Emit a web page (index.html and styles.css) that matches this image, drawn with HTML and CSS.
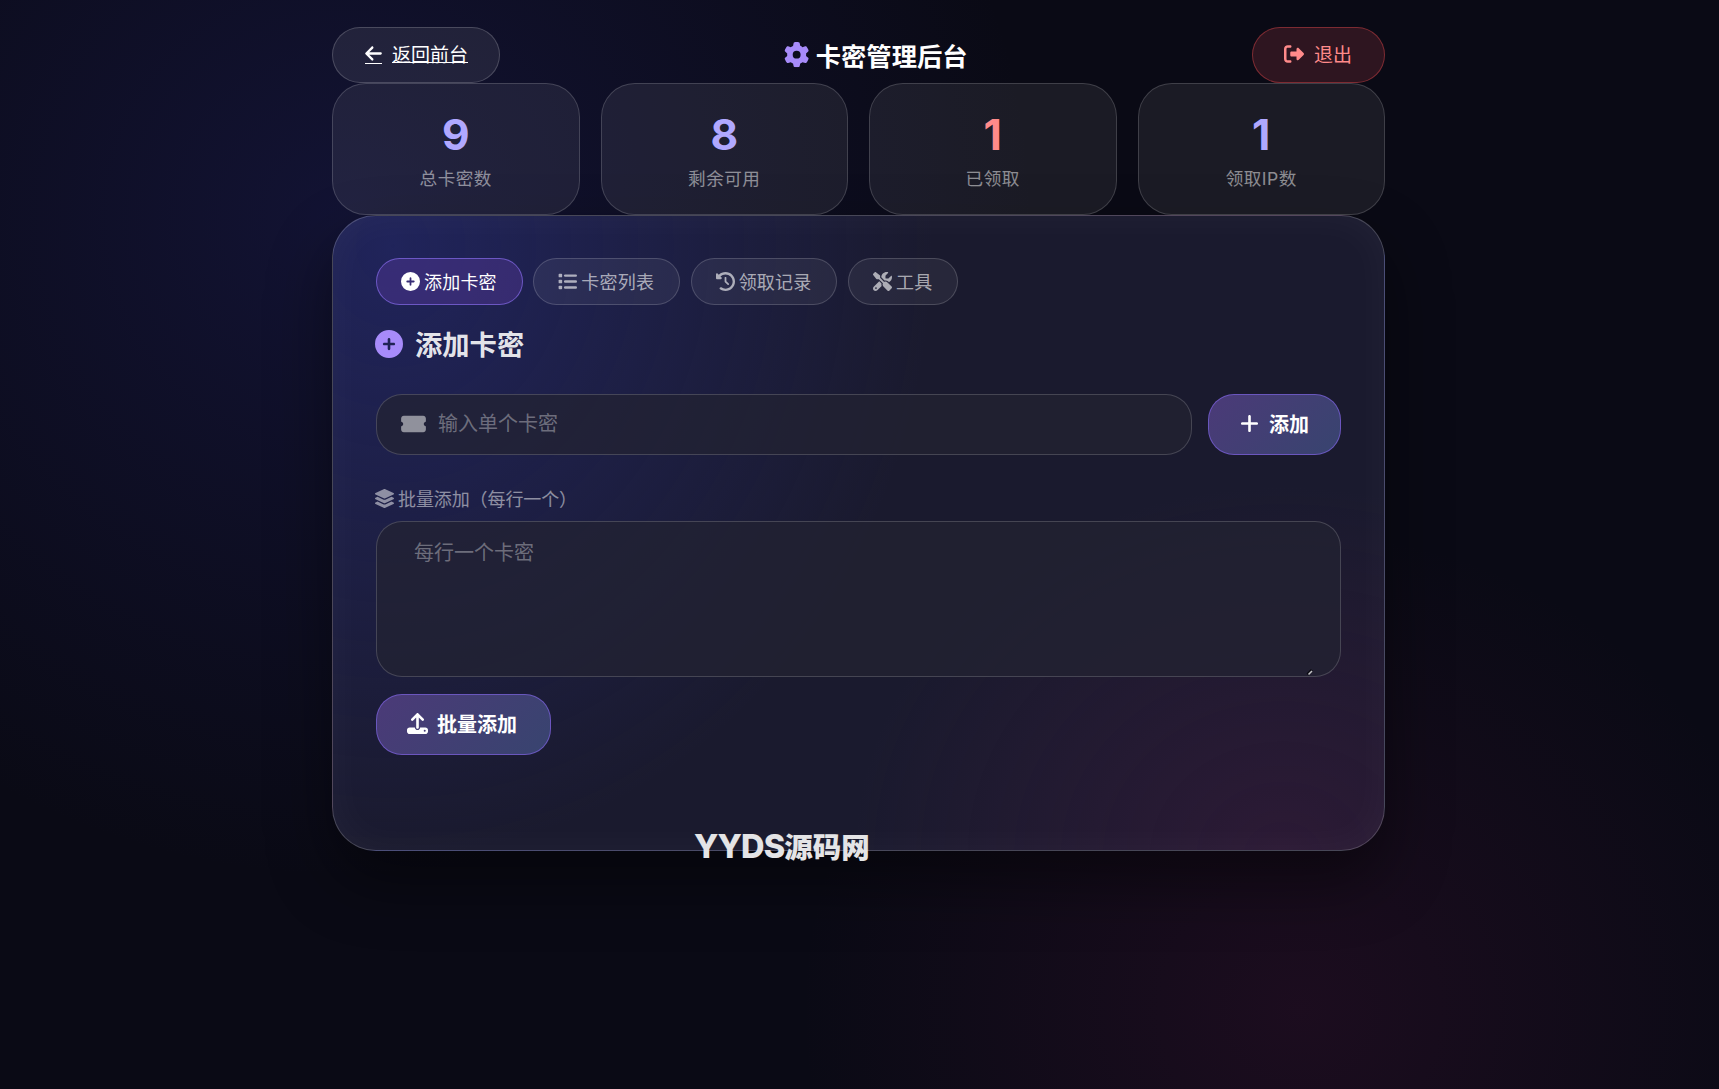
FILE: index.html
```html
<!DOCTYPE html>
<html lang="zh-CN">
<head>
<meta charset="utf-8">
<title>卡密管理后台</title>
<link rel="stylesheet" href="styles.css">
</head>
<body>
<svg class="sprite" width="0" height="0">
  <symbol id="i-back" viewBox="0 0 448 512"><path d="M9.4 233.4c-12.5 12.5-12.5 32.8 0 45.3l160 160c12.5 12.5 32.8 12.5 45.3 0s12.5-32.8 0-45.3L109.2 288 416 288c17.7 0 32-14.3 32-32s-14.3-32-32-32l-306.7 0L214.6 118.6c12.5-12.5 12.5-32.8 0-45.3s-32.8-12.5-45.3 0l-160 160z"/></symbol>
  <symbol id="i-gear" viewBox="0 0 512 512"><path d="M495.9 166.6c3.2 8.7 .5 18.4-6.4 24.6l-43.3 39.4c1.1 8.3 1.7 16.8 1.7 25.4s-.6 17.1-1.7 25.4l43.3 39.4c6.9 6.2 9.6 15.9 6.4 24.6c-4.4 11.9-9.7 23.3-15.8 34.3l-4.7 8.1c-6.6 11-14 21.4-22.1 31.2c-5.9 7.2-15.7 9.6-24.5 6.8l-55.7-17.7c-13.4 10.3-28.2 18.9-44 25.4l-12.5 57.1c-2 9.1-9 16.3-18.2 17.8c-13.8 2.3-28 3.5-42.5 3.5s-28.7-1.2-42.5-3.5c-9.2-1.5-16.2-8.7-18.2-17.8l-12.5-57.1c-15.8-6.5-30.6-15.1-44-25.4L83.1 425.9c-8.8 2.8-18.6 .3-24.5-6.8c-8.1-9.8-15.5-20.2-22.1-31.2l-4.7-8.1c-6.1-11-11.4-22.4-15.8-34.3c-3.2-8.7-.5-18.4 6.4-24.6l43.3-39.4C64.6 273.1 64 264.6 64 256s.6-17.1 1.7-25.4L22.4 191.2c-6.9-6.2-9.6-15.9-6.4-24.6c4.4-11.9 9.7-23.3 15.8-34.3l4.7-8.1c6.6-11 14-21.4 22.1-31.2c5.9-7.2 15.7-9.6 24.5-6.8l55.7 17.7c13.4-10.3 28.2-18.9 44-25.4l12.5-57.1c2-9.1 9-16.3 18.2-17.8C227.3 1.2 241.5 0 256 0s28.7 1.2 42.5 3.5c9.2 1.5 16.2 8.7 18.2 17.8l12.5 57.1c15.8 6.5 30.6 15.1 44 25.4l55.7-17.7c8.8-2.8 18.6-.3 24.5 6.8c8.1 9.8 15.5 20.2 22.1 31.2l4.7 8.1c6.1 11 11.4 22.4 15.8 34.3zM256 336a80 80 0 1 0 0-160 80 80 0 1 0 0 160z"/></symbol>
  <symbol id="i-exit" viewBox="0 0 512 512"><path d="M377.9 105.9L500.7 228.7c7.2 7.2 11.3 17.1 11.3 27.3s-4.1 20.1-11.3 27.3L377.9 406.1c-6.4 6.4-15 9.9-24 9.9c-18.7 0-33.9-15.2-33.9-33.9l0-62.1-128 0c-17.7 0-32-14.3-32-32l0-64c0-17.7 14.3-32 32-32l128 0 0-62.1c0-18.7 15.2-33.9 33.9-33.9c9 0 17.6 3.6 24 9.9zM160 96L96 96c-17.7 0-32 14.3-32 32l0 256c0 17.7 14.3 32 32 32l64 0c17.7 0 32 14.3 32 32s-14.3 32-32 32l-64 0c-53 0-96-43-96-96L0 128C0 75 43 32 96 32l64 0c17.7 0 32 14.3 32 32s-14.3 32-32 32z"/></symbol>
  <symbol id="i-add" viewBox="0 0 512 512"><path d="M256 512A256 256 0 1 0 256 0a256 256 0 1 0 0 512zM232 344l0-64-64 0c-13.3 0-24-10.7-24-24s10.7-24 24-24l64 0 0-64c0-13.3 10.7-24 24-24s24 10.7 24 24l0 64 64 0c13.3 0 24 10.7 24 24s-10.7 24-24 24l-64 0 0 64c0 13.3-10.7 24-24 24s-24-10.7-24-24z"/></symbol>
  <symbol id="i-list" viewBox="0 0 512 512"><rect x="16" y="48" width="96" height="96" rx="24"/><rect x="16" y="208" width="96" height="96" rx="24"/><rect x="16" y="368" width="96" height="96" rx="24"/><rect x="160" y="64" width="352" height="64" rx="32"/><rect x="160" y="224" width="352" height="64" rx="32"/><rect x="160" y="384" width="352" height="64" rx="32"/></symbol>
  <symbol id="i-history" viewBox="0 0 512 512"><path d="M75 75L41 41C25.9 25.9 0 36.6 0 57.9L0 168c0 13.3 10.7 24 24 24l110.1 0c21.4 0 32.1-25.9 17-41l-30.8-30.8C155 85.5 203 64 256 64c106 0 192 86 192 192s-86 192-192 192c-40.8 0-78.6-12.7-109.7-34.4c-14.5-10.1-34.4-6.6-44.6 7.9s-6.6 34.4 7.9 44.6C151.2 495 201.7 512 256 512c141.4 0 256-114.6 256-256S397.4 0 256 0C185.3 0 121.3 28.7 75 75zm181 53c-13.3 0-24 10.7-24 24l0 104c0 6.4 2.5 12.5 7 17l72 72c9.4 9.4 24.6 9.4 33.9 0s9.4-24.6 0-33.9l-65-65 0-94.1c0-13.3-10.7-24-24-24z"/></symbol>
  <symbol id="i-tools" viewBox="0 0 512 512"><path d="M78.6 5C69.1-2.4 55.6-1.5 47 7L7 47c-8.5 8.5-9.4 22-2.1 31.6l80 104c4.5 5.9 11.6 9.4 19 9.4l54.1 0 109 109c-14.7 29-10 65.4 14.3 89.6l112 112c12.5 12.5 32.8 12.5 45.3 0l64-64c12.5-12.5 12.5-32.8 0-45.3l-112-112c-24.2-24.2-60.6-29-89.6-14.3l-109-109 0-54.1c0-7.5-3.5-14.5-9.4-19L78.6 5zM19.9 396.1C7.2 408.8 0 426.1 0 444.1C0 481.6 30.4 512 67.9 512c18 0 35.3-7.2 48-19.9L233.7 374.3c-7.8-20.9-9-43.6-3.6-65.1l-61.7-61.7L19.9 396.1zM512 144c0-10.5-1.1-20.7-3.2-30.5c-2.4-11.2-16.1-14.1-24.2-6l-63.9 63.9c-3 3-7.1 4.7-11.3 4.7L352 176c-8.8 0-16-7.2-16-16l0-57.4c0-4.2 1.7-8.3 4.7-11.3l63.9-63.9c8.1-8.1 5.2-21.8-6-24.2C388.7 1.1 378.5 0 368 0C288.5 0 224 64.5 224 144l0 .8 85.3 85.3c36-9.1 75.8 .5 104 28.7L429 274.5c49-23 83-72.8 83-130.5zM56 432a24 24 0 1 1 48 0 24 24 0 1 1 -48 0z"/></symbol>
  <symbol id="i-ticket" viewBox="0 0 576 512"><path d="M0 128C0 92.7 28.7 64 64 64l448 0c35.3 0 64 28.7 64 64l0 64c0 8.8-7.4 15.7-15.7 18.6C541.5 217.1 528 235 528 256s13.5 38.9 32.3 45.4c8.3 2.9 15.7 9.8 15.7 18.6l0 64c0 35.3-28.7 64-64 64L64 448c-35.3 0-64-28.7-64-64l0-64c0-8.8 7.4-15.7 15.7-18.6C34.5 294.9 48 277 48 256s-13.5-38.9-32.3-45.4C7.4 207.7 0 200.8 0 192l0-64z"/></symbol>
  <symbol id="i-layers" viewBox="32 0 512 512"><path d="M264.5 5.2c14.9-6.9 32.1-6.9 47 0l218.6 101c8.5 3.9 13.9 12.4 13.9 21.8s-5.4 17.9-13.9 21.8l-218.6 101c-14.9 6.9-32.1 6.9-47 0L45.9 149.8C37.4 145.8 32 137.3 32 128s5.4-17.9 13.9-21.8L264.5 5.2zM476.9 209.6l53.2 24.6c8.5 3.9 13.9 12.4 13.9 21.8s-5.4 17.9-13.9 21.8l-218.6 101c-14.9 6.9-32.1 6.9-47 0L45.9 277.8C37.4 273.8 32 265.3 32 256s5.4-17.9 13.9-21.8l53.2-24.6 152 70.2c23.4 10.8 50.4 10.8 73.8 0l152-70.2zm-152 198.2l152-70.2 53.2 24.6c8.5 3.9 13.9 12.4 13.9 21.8s-5.4 17.9-13.9 21.8l-218.6 101c-14.9 6.9-32.1 6.9-47 0L45.9 405.8C37.4 401.8 32 393.3 32 384s5.4-17.9 13.9-21.8l53.2-24.6 152 70.2c23.4 10.8 50.4 10.8 73.8 0z"/></symbol>
  <symbol id="i-plus" viewBox="0 0 448 512"><path d="M256 80c0-17.7-14.3-32-32-32s-32 14.3-32 32l0 144L48 224c-17.7 0-32 14.3-32 32s14.3 32 32 32l144 0 0 144c0 17.7 14.3 32 32 32s32-14.3 32-32l0-144 144 0c17.7 0 32-14.3 32-32s-14.3-32-32-32l-144 0 0-144z"/></symbol>
  <symbol id="i-upload" viewBox="0 0 512 512"><path d="M288 109.3L288 352c0 17.7-14.3 32-32 32s-32-14.3-32-32l0-242.7-73.4 73.4c-12.5 12.5-32.8 12.5-45.3 0s-12.5-32.8 0-45.3l128-128c12.5-12.5 32.8-12.5 45.3 0l128 128c12.5 12.5 12.5 32.8 0 45.3s-32.8 12.5-45.3 0L288 109.3zM64 352l128 0c0 35.3 28.7 64 64 64s64-28.7 64-64l128 0c35.3 0 64 28.7 64 64l0 32c0 35.3-28.7 64-64 64L64 512c-35.3 0-64-28.7-64-64l0-32c0-35.3 28.7-64 64-64zM432 456a24 24 0 1 0 0-48 24 24 0 1 0 0 48z"/></symbol>
</svg>

<main class="page">
  <header class="topbar">
    <a class="pill back" href="#"><span class="back-icon"><svg class="icon"><use href="#i-back"/></svg></span><span class="back-text">返回前台</span></a>
    <h1 class="title"><svg class="icon"><use href="#i-gear"/></svg>卡密管理后台</h1>
    <a class="pill logout" href="#"><svg class="icon"><use href="#i-exit"/></svg><span>退出</span></a>
  </header>

  <section class="stats">
    <div class="stat"><div class="stat-num">9</div><div class="stat-label">总卡密数</div></div>
    <div class="stat"><div class="stat-num">8</div><div class="stat-label">剩余可用</div></div>
    <div class="stat"><div class="stat-num used">1</div><div class="stat-label">已领取</div></div>
    <div class="stat"><div class="stat-num">1</div><div class="stat-label">领取IP数</div></div>
  </section>

  <section class="panel">
    <nav class="tabs">
      <a class="tab active"><svg class="icon"><use href="#i-add"/></svg>添加卡密</a>
      <a class="tab"><svg class="icon"><use href="#i-list"/></svg>卡密列表</a>
      <a class="tab"><svg class="icon"><use href="#i-history"/></svg>领取记录</a>
      <a class="tab"><svg class="icon"><use href="#i-tools"/></svg>工具</a>
    </nav>
    <h2 class="heading"><svg class="icon"><use href="#i-add"/></svg><span>添加卡密</span></h2>
    <div class="add-row">
      <label class="field"><svg class="icon"><use href="#i-ticket"/></svg><input type="text" placeholder="输入单个卡密"></label>
      <button class="btn"><svg class="icon plus"><use href="#i-plus"/></svg><span>添加</span></button>
    </div>
    <div class="batch-label"><svg class="icon"><use href="#i-layers"/></svg><span>批量添加（每行一个）</span></div>
    <div class="batch-wrap"><textarea class="batch" placeholder="每行一个卡密"></textarea><svg class="grip" viewBox="0 0 8 8"><path class="grip-edge" d="M1.5 6.5L6 2"/><path class="grip-line" d="M2.5 6.5L6 3"/></svg></div>
    <button class="btn batch-btn"><svg class="icon"><use href="#i-upload"/></svg><span>批量添加</span></button>
  </section>
</main>
<div class="watermark">YYDS<span class="cjk">源码网</span></div>
</body>
</html>
```
FILE: styles.css
```css
* { box-sizing: border-box; }
html, body { height: 100%; }
body {
  margin: 0;
  overflow: hidden;
  font-family: Inter, "Noto Sans CJK SC", sans-serif;
  color: rgba(255, 255, 255, .9);
  background:
    radial-gradient(ellipse 690px 660px at 344px 218px, rgba(40, 42, 130, .28), transparent),
    radial-gradient(ellipse 500px 480px at 1300px 1010px, rgba(110, 25, 75, .18), transparent),
    #0a0a15;
}
.sprite { display: block; position: absolute; }
.icon { display: block; flex: none; width: 1em; height: 1em; fill: currentColor; }

.page { width: 1053px; margin-left: 332px; padding-top: 27px; }

.topbar { display: flex; justify-content: space-between; align-items: center; height: 56px; }
.pill {
  display: flex; align-items: center;
  height: 56px;
  border: 1px solid rgba(255, 255, 255, .18);
  border-radius: 32px;
  font-size: 19px; line-height: 28px;
}
.back { width: 168px; padding-left: 32px; color: #fff; background: rgba(255, 255, 255, .08); text-decoration: none; }
.back-icon { width: 17px; height: 19px; margin: -1px 10px 0 0; border-bottom: 1px solid #fff; overflow: hidden; }
.back-icon .icon { width: 17px; height: 19px; margin-top: -1px; }
.back-text { padding-top: 2px; text-decoration: underline; text-decoration-thickness: 1px; text-underline-offset: 0; text-decoration-skip-ink: none; }
.logout { width: 133px; padding-left: 31px; gap: 10px; color: #ff8a8a; background: rgba(255, 90, 100, .15); border-color: rgba(255, 80, 80, .38); text-decoration: none; }
.logout .icon { width: 20px; height: 20px; margin-top: -2px; }
.logout span { padding-top: 2px; }
.title { display: flex; align-items: center; gap: 6px; margin: 0; font-size: 25.3px; font-weight: 700; color: #fff; }
.title .icon { color: #a78bfa; }

.stats { display: grid; grid-template-columns: repeat(4, 1fr); gap: 21px; }
.stat {
  display: flex; flex-direction: column; align-items: center;
  height: 132px; padding-top: 25px;
  border: 1px solid rgba(255, 255, 255, .16);
  border-radius: 34px;
  background: rgba(250, 250, 255, .07);
}
.stat-num { font-size: 42.5px; line-height: 52px; font-weight: 700; color: #b0a8ff; }
.stat-num.used { color: #ff8a8a; }
.stat-label { margin-top: 4px; font-size: 17.6px; line-height: 28px; letter-spacing: .5px; color: rgba(255, 255, 255, .5); }

.panel {
  height: 636px; padding: 42px 43px;
  border: 1px solid rgba(255, 255, 255, .2);
  border-radius: 44px;
  background:
    radial-gradient(ellipse 540px 610px at 60px 30px, rgba(36, 42, 120, .6), transparent),
    radial-gradient(ellipse 430px 370px at 950px 640px, rgba(75, 25, 65, .36), transparent),
    #1a1a2e;
  box-shadow: 0 30px 64px rgba(0, 0, 0, .45), inset 0 0 44px rgba(255, 255, 255, .04);
}
.tabs { display: flex; gap: 10.5px; }
.tab {
  display: flex; align-items: center; gap: 4px;
  height: 47px; padding: 0 25px 2px 24px;
  border: 1px solid rgba(255, 255, 255, .17);
  border-radius: 24px;
  background: rgba(255, 255, 255, .06);
  font-size: 18px; letter-spacing: .2px;
  color: rgba(255, 255, 255, .62);
}
.tab .icon { width: 19px; height: 19px; margin-top: 1px; }
.tab.active { color: #fff; border-color: rgba(139, 110, 240, .65); background: rgba(105, 65, 180, .32); }
.heading { display: flex; align-items: center; gap: 12px; height: 40px; margin: 19px 0 30px -1px; font-size: 27.3px; line-height: 40px; font-weight: 700; }
.heading .icon { width: 28px; height: 28px; margin-top: -1px; color: #a78bfa; }
.heading span { padding-top: 4px; }

.add-row { display: flex; gap: 16px; }
.field {
  flex: 1; display: flex; align-items: center; gap: 12px;
  height: 61px; padding-left: 24px;
  border: 1px solid rgba(255, 255, 255, .17);
  border-radius: 26px;
  background: rgba(35, 35, 50, .72);
}
.field .icon { width: 25px; height: 22px; margin-top: -1px; color: rgba(255, 255, 255, .5); }
.field input { flex: 1; padding: 0 0 2px; border: 0; outline: 0; background: none; font: inherit; font-size: 20px; color: #fff; }
input::placeholder, textarea::placeholder { color: rgba(255, 255, 255, .35); }
.btn {
  display: flex; align-items: center; gap: 9px;
  width: 133px; height: 61px; padding: 0 0 0 31px;
  border: 1px solid rgba(120, 95, 215, .75);
  border-radius: 26px;
  background: linear-gradient(135deg, #4b3a78, #38446f);
  font: 700 20px/30px Inter, "Noto Sans CJK SC", sans-serif;
  color: #fff;
}
.btn .icon { width: 21px; height: 21px; margin-top: -2px; }
.btn .icon.plus { width: 19px; margin-right: 1px; }
.btn span { padding-top: 1px; }
.batch-label { display: flex; align-items: center; gap: 4px; height: 28px; margin: 29px 0 9px -1px; font-size: 18px; letter-spacing: -.1px; color: rgba(255, 255, 255, .5); }
.batch-label .icon { width: 19px; height: 19px; margin-top: 1px; }
.batch-wrap { position: relative; margin-bottom: 17px; }
.batch {
  display: block; width: 100%; height: 156px; margin: 0; padding: 15px 37px;
  border: 1px solid rgba(255, 255, 255, .17);
  border-radius: 26px;
  background: rgba(35, 35, 50, .72);
  font: 20px/32px Inter, "Noto Sans CJK SC", sans-serif;
  resize: none; outline: 0;
}
.grip { position: absolute; right: 27px; bottom: 1px; width: 8px; height: 8px; fill: none; }
.grip-edge { stroke: #0b0b12; stroke-width: 3; }
.grip-line { stroke: #c4c4c8; stroke-width: 1.6; }
.batch-btn { width: 175px; padding-left: 30px; }

.watermark {
  position: absolute; left: 694px; top: 826px;
  font-size: 32.5px; line-height: 42px; font-weight: 800; letter-spacing: -.9px;
  color: #e4e4e6; white-space: nowrap;
}
.watermark .cjk { font-size: 28.5px; letter-spacing: 0; }
```
